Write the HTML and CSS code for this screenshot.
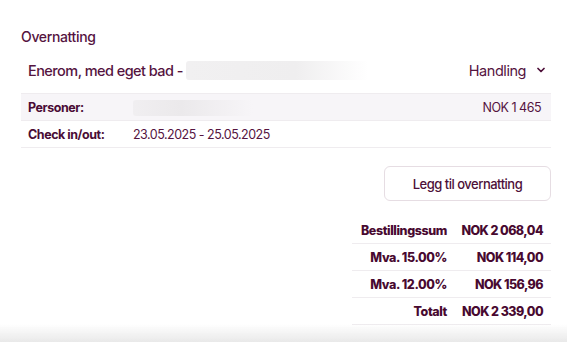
FILE: index.html
```html
<!DOCTYPE html>
<html lang="no">
<head>
<meta charset="utf-8">
<link rel="stylesheet" href="styles.css">
</head>
<body>
<div class="page">
  <h2 class="title">Overnatting</h2>
  <div class="room">
    <div class="room-name">Enerom, med eget bad - <span class="blur blur-name"></span></div>
    <div class="action">Handling
      <svg class="chev" width="8" height="6" viewBox="0 0 8 6"><path d="M1 1.5 L4 4.5 L7 1.5" fill="none" stroke="#4d0f38" stroke-width="1.7" stroke-linecap="round" stroke-linejoin="round"/></svg>
    </div>
  </div>
  <div class="details">
    <div class="drow shaded">
      <span class="dlabel">Personer:</span>
      <span class="dval"><span class="blur blur-persons"></span></span>
      <span class="dprice">NOK 1 465</span>
    </div>
    <div class="drow">
      <span class="dlabel">Check in/out:</span>
      <span class="dval">23.05.2025 - 25.05.2025</span>
      <span class="dprice"></span>
    </div>
  </div>
  <div class="btn-wrap"><button class="btn">Legg til overnatting</button></div>
  <div class="totals">
    <div class="trow"><span class="tlabel">Bestillingssum</span><span class="tval">NOK 2 068,04</span></div>
    <div class="trow"><span class="tlabel">Mva. 15.00%</span><span class="tval">NOK 114,00</span></div>
    <div class="trow"><span class="tlabel">Mva. 12.00%</span><span class="tval">NOK 156,96</span></div>
    <div class="trow"><span class="tlabel">Totalt</span><span class="tval">NOK 2 339,00</span></div>
  </div>
</div>
<div class="fade"></div>
</body>
</html>
```
FILE: styles.css
```css
* { box-sizing: border-box; }
html, body { margin: 0; background: #fff; }
body {
  font-family: Inter, "Noto Sans", sans-serif;
  color: #55143f;
  overflow: hidden;
}
.page { padding: 28px 16px 0 21px; }
.title {
  margin: 0;
  font-size: 14px;
  line-height: 18px;
  font-weight: 500;
  letter-spacing: -0.35px;
}
.room {
  margin-top: 4px;
  height: 40px;
  display: flex;
  align-items: center;
  justify-content: space-between;
  padding: 0 6px 0 7px;
}
.room-name {
  font-size: 14.5px;
  font-weight: 500;
  letter-spacing: -0.55px;
  display: flex;
  align-items: center;
  gap: 3px;
}
.blur {
  display: inline-block;
  border-radius: 3px;
}
.blur-name {
  width: 182px;
  height: 19px;
  background: linear-gradient(to right, #f1f0f1 0%, #efeeef 60%, rgba(240,239,240,0) 100%);
}
.action {
  font-size: 14.5px;
  font-weight: 400;
  display: flex;
  align-items: center;
  gap: 11px;
  letter-spacing: -0.45px;
}
.chev { display: block; }
.details { margin-top: 3px; }
.drow {
  display: grid;
  grid-template-columns: 105px 1fr auto;
  align-items: center;
  height: 27px;
  padding: 0 10px 0 7px;
  border-top: 1px solid #efecef;
  font-size: 12.5px;
  letter-spacing: -0.5px;
}
.drow:last-child { border-bottom: 1px solid #efecef; height: 28px; }
.shaded { background: #f7f5f8; }
.dlabel { font-weight: 700; color: #4a0c35; letter-spacing: -0.45px; }
.dval { font-weight: 400; }
.blur-persons {
  width: 120px;
  height: 16px;
  margin-top: 4px;
  background: linear-gradient(to right, rgba(236,234,236,0.6), #ebe9eb 40%, rgba(240,238,240,0) 100%);
}
.dprice { font-weight: 400; letter-spacing: -0.5px; }
.btn-wrap { display: flex; justify-content: flex-end; margin-top: 18px; }
.btn {
  width: 167px;
  height: 35px;
  background: #fff;
  border: 1px solid #e6dde3;
  border-radius: 6px;
  font-family: inherit;
  font-size: 13px;
  font-weight: 500;
  letter-spacing: -0.5px;
  color: #4d0f38;
}
.totals {
  margin: 16px 0 0 auto;
  width: 199px;
}
.trow {
  display: grid;
  grid-template-columns: 95px 104px;
  align-items: center;
  height: 27px;
  border-bottom: 1px solid #efecef;
  font-size: 12.5px;
  font-weight: 800;
  color: #480930;
}
.tlabel { text-align: right; letter-spacing: -0.4px; }
.tval { text-align: right; padding-right: 8px; letter-spacing: -0.55px; }
.fade {
  position: fixed;
  left: 0; right: 0; bottom: 0;
  height: 18px;
  background: linear-gradient(to bottom, rgba(240,240,240,0), #e9e9e9);
}
```
